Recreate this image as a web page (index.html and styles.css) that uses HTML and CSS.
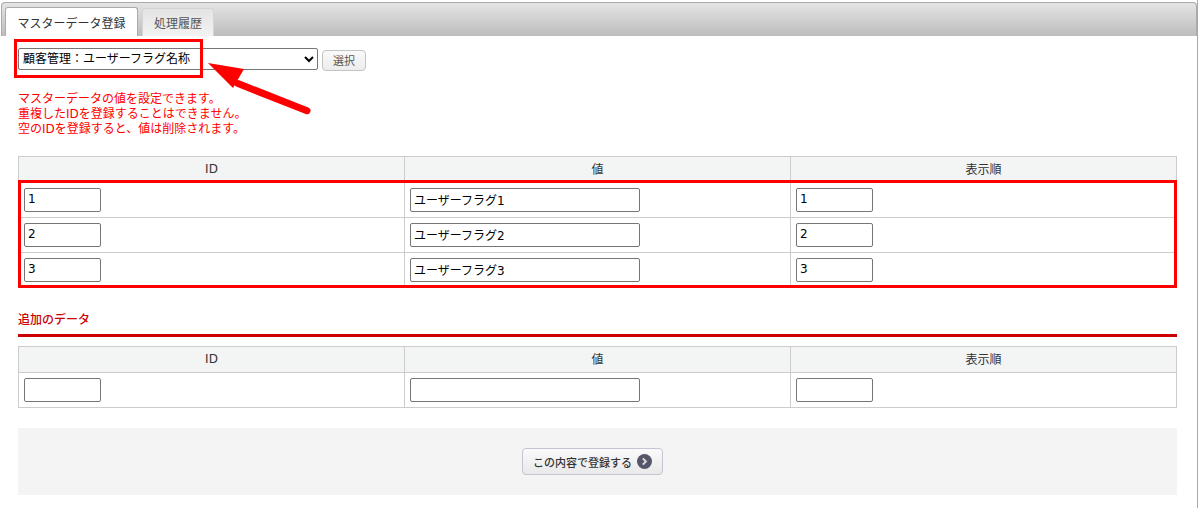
FILE: index.html
```html
<!DOCTYPE html>
<html lang="ja">
<head>
<meta charset="utf-8">
<title>マスターデータ登録</title>
<link rel="stylesheet" href="styles.css">
</head>
<body>
<div class="panel">
  <div class="tabbar">
    <a class="tab tab-active">マスターデータ登録</a>
    <a class="tab">処理履歴</a>
  </div>
  <div class="content">
    <form class="picker">
      <select class="picker-select"><option>顧客管理：ユーザーフラグ名称</option></select>
      <button type="button" class="picker-btn">選択</button>
    </form>
    <p class="notice">マスターデータの値を設定できます。<br>重複したIDを登録することはできません。<br>空のIDを登録すると、値は削除されます。</p>
    <table class="grid">
      <thead><tr><th>ID</th><th>値</th><th>表示順</th></tr></thead>
      <tbody>
        <tr><td><input class="short" value="1"></td><td><input class="long" value="ユーザーフラグ1"></td><td><input class="short" value="1"></td></tr>
        <tr><td><input class="short" value="2"></td><td><input class="long" value="ユーザーフラグ2"></td><td><input class="short" value="2"></td></tr>
        <tr><td><input class="short" value="3"></td><td><input class="long" value="ユーザーフラグ3"></td><td><input class="short" value="3"></td></tr>
      </tbody>
    </table>
    <h3 class="section-title">追加のデータ</h3>
    <table class="grid">
      <thead><tr><th>ID</th><th>値</th><th>表示順</th></tr></thead>
      <tbody>
        <tr><td><input class="short"></td><td><input class="long"></td><td><input class="short"></td></tr>
      </tbody>
    </table>
    <div class="actions">
      <button type="button" class="submit">この内容で登録する
        <svg class="submit-icon" width="15" height="15" viewBox="0 0 15 15"><circle cx="7.5" cy="7.5" r="7.5" fill="#55556a"/><path d="M5.8 4.4 8.9 7.5 5.8 10.6" fill="none" stroke="#d8d8d8" stroke-width="2"/></svg>
      </button>
    </div>
  </div>
</div>
<div class="mark mark-select"></div>
<div class="mark mark-rows"></div>
<svg class="arrow" width="120" height="60" viewBox="0 0 120 60"><path d="M2 3 38 9 27 28Z" fill="#f00"/><path d="M32 23.6 101 50.7" fill="none" stroke="#f00" stroke-width="7" stroke-linecap="round"/></svg>
</body>
</html>
```

FILE: styles.css
```css
* { box-sizing: border-box; }
html, body { margin: 0; padding: 0; background: #fff; }
body {
  width: 1198px;
  height: 508px;
  overflow: hidden;
  position: relative;
  font-family: "DejaVu Sans", "Noto Sans CJK JP", sans-serif;
  font-size: 12px;
  color: #333;
}
.panel { margin-left: 1px; border-right: 1px solid #aaa; height: 508px; padding-top: 2px; }
.tabbar {
  height: 34px;
  display: flex;
  align-items: flex-end;
  gap: 4px;
  padding-left: 3px;
  background: linear-gradient(#e4e4e4, #bdbdbd);
  border: 1px solid #aaa;
  border-bottom: 0;
  border-radius: 4px 4px 0 0;
}
.tab {
  display: flex;
  align-items: center;
  justify-content: center;
  height: 28px;
  width: 72px;
  color: #555;
  border: 1px solid #d4d4d4;
  border-bottom: 0;
  border-radius: 3px 3px 0 0;
  background: linear-gradient(#e4e4e4, #f2f2f2);
}
.tab-active {
  width: 133px;
  height: 29px;
  color: #333;
  background: #fff;
  border-color: #aaa;
}
.content { padding: 12px 0 0 17px; width: 1176px; }
.picker { display: flex; align-items: flex-start; gap: 4px; height: 23px; margin: 0; }
.picker-select {
  width: 300px;
  height: 22px;
  font: inherit;
  color: #000;
  background: #fff;
  border: 1px solid #767676;
  border-radius: 2px;
}
.picker-btn {
  width: 44px;
  height: 21px;
  margin-top: 2px;
  padding: 0 0 1px;
  font: 11px "DejaVu Sans", "Noto Sans CJK JP", sans-serif;
  color: #555;
  border: 1px solid #c4c4c4;
  border-radius: 4px;
  background: linear-gradient(#fafafa, #ececec);
}
.notice { margin: 21px 0 19px; color: #f00; line-height: 15px; }
.grid { width: 1159px; border-collapse: collapse; table-layout: fixed; }
.grid th, .grid td { border: 1px solid #ccc; }
.grid th { height: 26px; padding: 0 0 2px; font-weight: normal; background: #f3f5f4; }
.grid td { height: 35px; padding: 0 5px; }
.grid input {
  display: block;
  height: 24px;
  padding: 0 3px 2px;
  font: inherit;
  color: #000;
  border: 1px solid #767676;
  border-radius: 2px;
  background: #fff;
}
.short { width: 77px; }
.long { width: 230px; }
.section-title {
  margin: 23px 0 9px;
  height: 26px;
  font-size: 12px;
  line-height: 18px;
  font-weight: 500;
  color: #c00;
  border-bottom: 3px solid #c00;
}
.actions {
  display: flex;
  justify-content: center;
  align-items: center;
  width: 1159px;
  height: 67px;
  margin-top: 20px;
  padding-right: 10px;
  background: #f4f4f4;
}
.submit {
  display: flex;
  align-items: center;
  justify-content: center;
  gap: 5px;
  width: 141px;
  height: 27px;
  padding: 0;
  font: 500 11px "DejaVu Sans", "Noto Sans CJK JP", sans-serif;
  color: #333;
  border: 1px solid #c4c4d4;
  border-radius: 4px;
  background: linear-gradient(#fafafa, #e9e9e9);
}
.mark { position: absolute; border: 3px solid #f00; pointer-events: none; }
.mark-select { left: 14px; top: 39px; width: 189px; height: 39px; }
.mark-rows { left: 18px; top: 180px; width: 1159px; height: 108px; }
.arrow { position: absolute; left: 206px; top: 60px; }
```
